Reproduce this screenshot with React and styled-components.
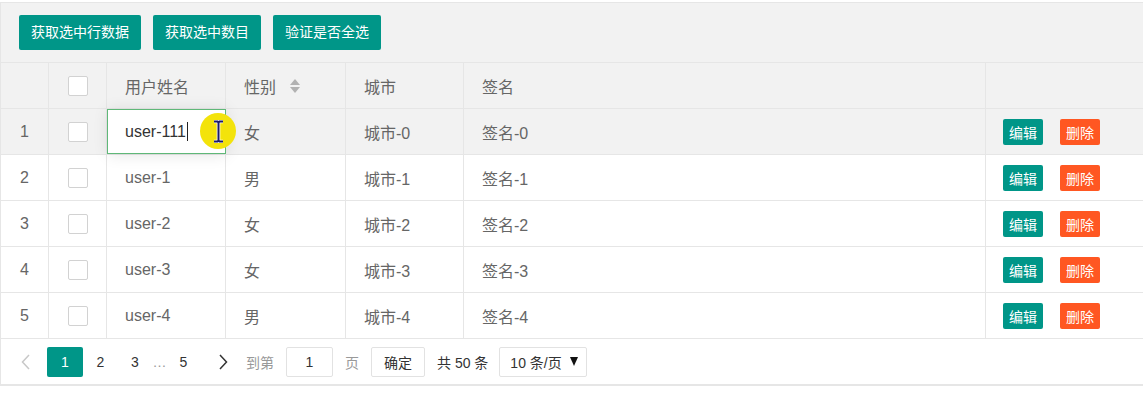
import React from "react";
import styled, { createGlobalStyle } from "styled-components";

const Global = createGlobalStyle`
  html, body { margin: 0; padding: 0; background: #fff; overflow: hidden; }
  body { font-family: "Liberation Sans", "Noto Sans CJK SC", sans-serif; color: #666; }
  * { box-sizing: border-box; }
`;

const Frame = styled.div`
  margin-top: 2px;
  width: 1160px;
  border: 1px solid #e6e6e6;
  border-right: none;
`;

const Toolbar = styled.div`
  display: flex;
  gap: 12px;
  height: 60px;
  padding: 12px 18px;
  background: #f2f2f2;
  border-bottom: 1px solid #e6e6e6;
`;

const ToolButton = styled.button`
  height: 35px;
  padding: 0 12px;
  border: none;
  border-radius: 2px;
  background: #009688;
  color: #fff;
  font: 14px "Liberation Sans", "Noto Sans CJK SC", sans-serif;
  line-height: 35px;
  white-space: nowrap;
`;

const Row = styled.div`
  display: grid;
  grid-template-columns: 48px 58px 119px 120px 118px 522px 1fr;
  height: 46px;
  border-bottom: 1px solid #e6e6e6;
  background: ${(p) => (p.$shade ? "#f2f2f2" : "#fff")};
`;

const Cell = styled.div`
  position: relative;
  display: flex;
  align-items: center;
  justify-content: ${(p) => (p.$center ? "center" : "flex-start")};
  padding: 0 ${(p) => (p.$center ? 0 : p.$pad ?? 18)}px;
  border-right: ${(p) => (p.$last ? "none" : "1px solid #e6e6e6")};
  font-size: 16px;
  color: #666;
  white-space: nowrap;
`;

const Check = styled.span`
  width: 20px;
  height: 20px;
  border: 1px solid #d2d2d2;
  border-radius: 2px;
  background: #fff;
`;

const SortIcon = styled.svg`
  margin-left: 14px;
`;

const EditBox = styled.div`
  position: absolute;
  left: 0;
  top: 0;
  width: 119px;
  height: 45px;
  border: 1px solid #5fb878;
  background: #fff;
  box-shadow: 1px 1px 16px rgba(0, 0, 0, 0.1);
  display: flex;
  align-items: center;
  padding-left: 17px;
  font-size: 16px;
  color: #333;
  z-index: 2;
`;

const Caret = styled.span`
  display: inline-block;
  width: 1px;
  height: 19px;
  margin-left: 1px;
  background: #222;
`;

const Highlight = styled.div`
  position: absolute;
  left: 93px;
  top: 4px;
  width: 36px;
  height: 36px;
  border-radius: 50%;
  background: #f3e30b;
  z-index: 3;
  display: flex;
  align-items: center;
  justify-content: center;
`;

const SmallBtn = styled.span`
  display: inline-flex;
  align-items: center;
  justify-content: center;
  width: 40px;
  height: 26px;
  border-radius: 2px;
  background: ${(p) => p.$bg};
  color: #fff;
  font-size: 14px;
  margin-right: ${(p) => p.$mr || 0}px;
`;

const Pager = styled.div`
  display: flex;
  align-items: center;
  height: 46px;
  padding-left: 9px;
  border-bottom: 1px solid #e6e6e6;
  font-size: 14px;
  color: #333;
`;

const PItem = styled.span`
  display: inline-flex;
  align-items: center;
  justify-content: center;
  width: ${(p) => p.$w}px;
  height: 30px;
  margin-right: ${(p) => p.$mr || 0}px;
  border-radius: 2px;
  background: ${(p) => (p.$active ? "#009688" : "transparent")};
  color: ${(p) => (p.$active ? "#fff" : p.$muted ? "#999" : "#333")};
`;

const PText = styled.span`
  color: ${(p) => p.$c || "#999"};
  margin-right: ${(p) => p.$mr || 0}px;
`;

const PBox = styled.span`
  display: inline-flex;
  align-items: center;
  justify-content: ${(p) => p.$justify || "center"};
  width: ${(p) => p.$w}px;
  height: 30px;
  padding: ${(p) => p.$pad || "0"};
  border: 1px solid #e2e2e2;
  border-radius: 2px;
  background: #fff;
  color: #333;
  margin-right: ${(p) => p.$mr || 0}px;
`;

const IBeam = () => (
  <svg width="11" height="23" viewBox="0 0 11 23">
    <path d="M1 1.5h3.5l1 1 1-1H10M5.5 2.5v18M1 21.5h3.5l1-1 1 1H10" stroke="#fff" strokeWidth="3.6" fill="none" />
    <path d="M1 1.5h3.5l1 1 1-1H10M5.5 2.5v18M1 21.5h3.5l1-1 1 1H10" stroke="#1d1d6b" strokeWidth="2" fill="none" />
  </svg>
);

const Chevron = ({ dir, color }) => (
  <svg width="9" height="16" viewBox="0 0 9 16">
    <path
      d={dir === "left" ? "M8 1L1.5 8 8 15" : "M1 1l6.5 7L1 15"}
      stroke={color}
      strokeWidth="1.5"
      fill="none"
    />
  </svg>
);

const rows = [
  { n: 1, name: "user-0", sex: "女", city: "城市-0", sign: "签名-0" },
  { n: 2, name: "user-1", sex: "男", city: "城市-1", sign: "签名-1" },
  { n: 3, name: "user-2", sex: "女", city: "城市-2", sign: "签名-2" },
  { n: 4, name: "user-3", sex: "女", city: "城市-3", sign: "签名-3" },
  { n: 5, name: "user-4", sex: "男", city: "城市-4", sign: "签名-4" },
];

export default function App() {
  return (
    <>
      <Global />
      <Frame>
        <Toolbar>
          <ToolButton>获取选中行数据</ToolButton>
          <ToolButton>获取选中数目</ToolButton>
          <ToolButton>验证是否全选</ToolButton>
        </Toolbar>
        <Row $shade>
          <Cell $center />
          <Cell $center>
            <Check />
          </Cell>
          <Cell>用户姓名</Cell>
          <Cell>
            性别
            <SortIcon width="10" height="14" viewBox="0 0 10 14">
              <path d="M5 0L10 6H0z" fill="#b2b2b2" />
              <path d="M5 14L10 8H0z" fill="#b2b2b2" />
            </SortIcon>
          </Cell>
          <Cell>城市</Cell>
          <Cell>签名</Cell>
          <Cell $last />
        </Row>
        {rows.map((r) => (
          <Row key={r.n} $shade={r.n === 1}>
            <Cell $center>{r.n}</Cell>
            <Cell $center>
              <Check />
            </Cell>
            <Cell>
              {r.n === 1 ? (
                <>
                  <EditBox>
                    user-111
                    <Caret />
                  </EditBox>
                  <Highlight>
                    <IBeam />
                  </Highlight>
                </>
              ) : (
                r.name
              )}
            </Cell>
            <Cell>{r.sex}</Cell>
            <Cell>{r.city}</Cell>
            <Cell>{r.sign}</Cell>
            <Cell $last $pad={17}>
              <SmallBtn $bg="#009688" $mr={17}>编辑</SmallBtn>
              <SmallBtn $bg="#ff5722">删除</SmallBtn>
            </Cell>
          </Row>
        ))}
        <Pager>
          <PItem $w={30} $mr={7}>
            <Chevron dir="left" color="#c8c8c8" />
          </PItem>
          <PItem $w={36} $active>1</PItem>
          <PItem $w={35}>2</PItem>
          <PItem $w={34}>3</PItem>
          <PItem $w={15} $muted>…</PItem>
          <PItem $w={33}>5</PItem>
          <PItem $w={46}>
            <Chevron dir="right" color="#333" />
          </PItem>
          <PText $mr={12}>到第</PText>
          <PBox $w={47} $mr={12}>1</PBox>
          <PText $mr={12}>页</PText>
          <PBox $w={54} $mr={12}>确定</PBox>
          <PText $c="#333" $mr={11}>共 50 条</PText>
          <PBox $w={88} $justify="space-between" $pad="0 8px 0 10px">
            10 条/页
            <svg width="8" height="9" viewBox="0 0 8 9">
              <path d="M0 0h8L4 9z" fill="#111" />
            </svg>
          </PBox>
        </Pager>
      </Frame>
    </>
  );
}
